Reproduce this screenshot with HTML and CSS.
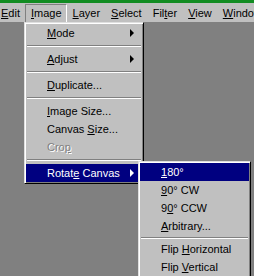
FILE: index.html
```html
<!DOCTYPE html>
<html lang="en">
<head>
  <meta charset="UTF-8">
  <title>Image menu</title>
  <link rel="stylesheet" href="styles.css">
</head>
<body>

  <div class="titlebar"></div>

  <!-- Menu bar -->
  <div class="menubar">
    <span class="mb-item first"><u>E</u>dit</span>
    <span class="mb-item open"><u>I</u>mage</span>
    <span class="mb-item"><u>L</u>ayer</span>
    <span class="mb-item"><u>S</u>elect</span>
    <span class="mb-item">Fil<u>t</u>er</span>
    <span class="mb-item"><u>V</u>iew</span>
    <span class="mb-item"><u>W</u>indow</span>
  </div>

  <!-- Image dropdown -->
  <div class="menu main-menu">
    <div class="item"><span><u>M</u>ode</span><i class="arrow"></i></div>
    <div class="sep"></div>
    <div class="item"><span><u>A</u>djust</span><i class="arrow"></i></div>
    <div class="sep"></div>
    <div class="item"><span><u>D</u>uplicate...</span></div>
    <div class="sep"></div>
    <div class="item"><span><u>I</u>mage Size...</span></div>
    <div class="item"><span>Canvas <u>S</u>ize...</span></div>
    <div class="item disabled"><span>Cro<u>p</u></span></div>
    <div class="sep"></div>
    <div class="item active"><span>Rotat<u>e</u> Canvas</span><i class="arrow"></i></div>
  </div>

  <!-- Rotate Canvas submenu -->
  <div class="menu sub-menu">
    <div class="item active"><span><u>1</u>80°</span></div>
    <div class="item"><span><u>9</u>0° CW</span></div>
    <div class="item"><span>9<u>0</u>° CCW</span></div>
    <div class="item"><span><u>A</u>rbitrary...</span></div>
    <div class="sep"></div>
    <div class="item"><span>Flip <u>H</u>orizontal</span></div>
    <div class="item"><span>Flip <u>V</u>ertical</span></div>
  </div>

</body>
</html>
```

FILE: styles.css
```css
body {
  margin: 0;
  width: 254px;
  height: 276px;
  overflow: hidden;
  position: relative;
  background: #808080;
  font-family: "Liberation Sans", Arial, sans-serif;
  font-size: 11px;
  color: #000;
}
u {
  text-decoration: underline;
  text-underline-offset: 1px;
}
.titlebar {
  height: 3px;
  background: #128c22;
}
.menubar {
  display: flex;
  height: 19px;
  padding-top: 1px;
  box-sizing: border-box;
  background: #c0c0c0;
  white-space: nowrap;
}
.mb-item {
  height: 18px;
  line-height: 18px;
  padding: 0 4.5px;
  border: 1px solid transparent;
  border-top: 0;
  border-bottom: 0;
}
.mb-item.first {
  padding-left: 0;
}
.mb-item.open {
  border: 1px solid;
  border-color: #808080 #fff #fff #808080;
  line-height: 16px;
}
.menu {
  position: absolute;
  background: #c0c0c0;
  border: 1px solid;
  border-color: #dfdfdf #000 #000 #dfdfdf;
  box-shadow: inset 1px 1px 0 #fff, inset -1px -1px 0 #808080;
  padding: 1px;
  box-sizing: border-box;
}
.main-menu {
  left: 24px;
  top: 22px;
  width: 120px;
}
.sub-menu {
  left: 138px;
  top: 161px;
  width: 113px;
}
.item {
  display: flex;
  align-items: center;
  justify-content: space-between;
  height: 18px;
  line-height: 18px;
  padding: 0 8px 0 21px;
  white-space: nowrap;
}
.item.active {
  background: #000080;
  color: #fff;
}
.item.disabled {
  color: #808080;
  text-shadow: 1px 1px 0 #fff;
}
.arrow {
  width: 0;
  height: 0;
  border-top: 4px solid transparent;
  border-bottom: 4px solid transparent;
  border-left: 4px solid #000;
}
.item.active .arrow {
  border-left-color: #fff;
}
.sep {
  height: 1px;
  margin: 3px 1px;
  background: #808080;
  border-bottom: 1px solid #fff;
}
.sub-menu .sep {
  margin: 2px 1px 1px;
}
```
